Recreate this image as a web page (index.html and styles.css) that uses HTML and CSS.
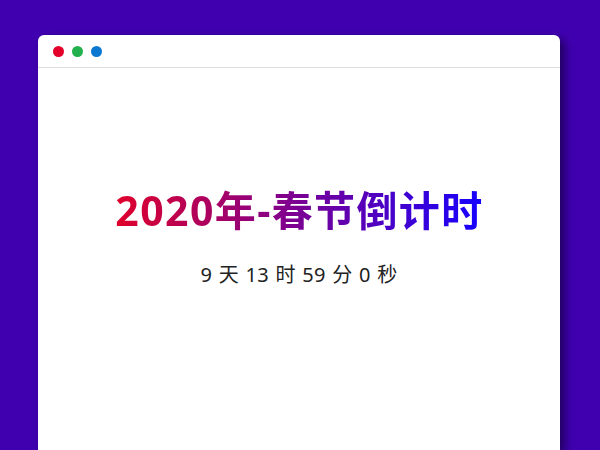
FILE: index.html
```html
<!DOCTYPE html>
<html lang="zh">
<head>
<meta charset="utf-8">
<link rel="stylesheet" href="styles.css">
</head>
<body>
<div class="window">
  <div class="titlebar">
    <span class="dot red"></span>
    <span class="dot green"></span>
    <span class="dot blue"></span>
  </div>
  <div class="content">
    <h1 class="title">2020年-春节倒计时</h1>
    <p class="countdown">9 天 13 时 59 分 0 秒</p>
  </div>
</div>
</body>
</html>
```
FILE: styles.css
```css
html, body {
  margin: 0;
  padding: 0;
  height: 100%;
}
body {
  background: #4000b0;
  font-family: "Noto Sans", "Noto Sans CJK SC", sans-serif;
  padding: 35px 40px 0 38px;
  box-sizing: border-box;
  overflow: hidden;
}
.window {
  background: #fff;
  border-radius: 6px 6px 0 0;
  height: 415px;
  box-shadow: 5px 4px 10px rgba(20, 0, 60, 0.7);
}
.titlebar {
  height: 32px;
  border-bottom: 1px solid #ddd;
  display: flex;
  align-items: center;
  padding-left: 15px;
  gap: 8px;
}
.dot {
  width: 11px;
  height: 11px;
  border-radius: 50%;
}
.red { background: #e4002b; }
.green { background: #22b14c; }
.blue { background: #0a78d0; }
.content {
  display: flex;
  flex-direction: column;
  align-items: center;
  padding-top: 116px;
}
.title {
  margin: 0;
  font-size: 41px;
  font-weight: 700;
  letter-spacing: 1.4px;
  line-height: 52px;
  padding-left: 1px;
  background: linear-gradient(90deg, #e0002a, #1400ff);
  -webkit-background-clip: text;
  background-clip: text;
  color: transparent;
}
.countdown {
  margin: 27px 0 0;
  font-size: 20px;
  color: #222;
  line-height: 24px;
  word-spacing: 1px;
  letter-spacing: 0.3px;
}
```
